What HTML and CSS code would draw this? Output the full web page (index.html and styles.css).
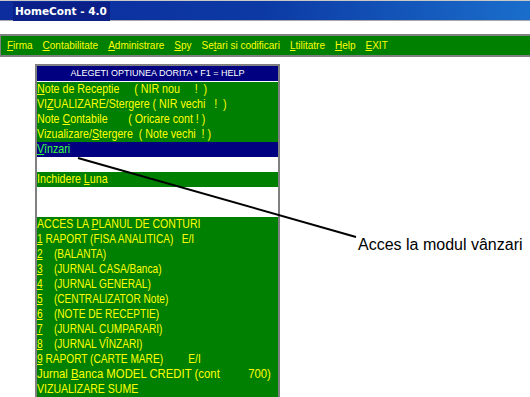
FILE: index.html
```html
<!DOCTYPE html>
<html lang="ro">
<head>
    <meta charset="UTF-8">
    <meta name="viewport" content="width=device-width, initial-scale=1.0">
    <title>HomeCont - 4.0</title>
    <link rel="stylesheet" href="styles.css">
</head>
<body>
    <div class="titlebar"><span class="title">HomeCont - 4.0</span></div>

    <div class="menubar">
        <span><u>F</u>irma</span>
        <span><u>C</u>ontabilitate</span>
        <span><u>A</u>dministrare</span>
        <span><u>S</u>py</span>
        <span>Se<u>t</u>ari si codificari</span>
        <span><u>L</u>tilitatre</span>
        <span><u>H</u>elp</span>
        <span><u>E</u>XIT</span>
    </div>

    <div class="panel">
        <div class="head">ALEGETI OPTIUNEA DORITA * F1 = HELP</div>
        <div class="row"><span class="t"><u>N</u>ote de Receptie     ( NIR nou     !  )</span></div>
        <div class="row"><span class="t">VI<u>Z</u>UALIZARE/Stergere ( NIR vechi   !  )</span></div>
        <div class="row"><span class="t">Note <u>C</u>ontabile       ( Oricare cont ! )</span></div>
        <div class="row"><span class="t">Vizualizare/<u>S</u>tergere  ( Note vechi  ! )</span></div>
        <div class="row sel"><span class="t"><u>V</u>înzari</span></div>
        <div class="gap"></div>
        <div class="row"><span class="t">Inchidere <u>L</u>una</span></div>
        <div class="gap"></div>
        <div class="gap"></div>
        <div class="row caps wide"><span class="t">ACCES LA <u>P</u>LANUL DE CONTURI</span></div>
        <div class="row caps"><span class="t"><u>1</u> RAPORT (FISA ANALITICA)   E/I</span></div>
        <div class="row caps"><span class="t"><u>2</u>    (BALANTA)</span></div>
        <div class="row caps"><span class="t"><u>3</u>    (JURNAL CASA/Banca)</span></div>
        <div class="row caps"><span class="t"><u>4</u>    (JURNAL GENERAL)</span></div>
        <div class="row caps"><span class="t"><u>5</u>    (CENTRALIZATOR Note)</span></div>
        <div class="row caps"><span class="t"><u>6</u>    (NOTE DE RECEPTIE)</span></div>
        <div class="row caps"><span class="t"><u>7</u>    (JURNAL CUMPARARI)</span></div>
        <div class="row caps"><span class="t"><u>8</u>    (JURNAL VÎNZARI)</span></div>
        <div class="row caps"><span class="t"><u>9</u> RAPORT (CARTE MARE)         E/I</span></div>
        <div class="row long"><span class="t">Jurnal <u>B</u>anca MODEL CREDIT (cont         700)</span></div>
        <div class="row caps wide"><span class="t">VIZUALIZARE SUME</span></div>
    </div>

    <!-- annotation drawn over the screenshot -->
    <svg class="pointer" width="530" height="397" viewBox="0 0 530 397">
        <line x1="78" y1="158" x2="356" y2="237" stroke="#000" stroke-width="2"/>
    </svg>
    <div class="callout">Acces la modul vânzari</div>
</body>
</html>
```

FILE: styles.css
```css
body {
    margin: 0;
    width: 530px;
    height: 397px;
    overflow: hidden;
    background: #fff;
    font-family: "Liberation Sans", Arial, sans-serif;
    position: relative;
}
u {
    text-decoration: underline;
    text-underline-offset: 1px;
}
.titlebar {
    height: 19px;
    border-top: 1px solid #c8c8c8;
    border-bottom: 1px solid #a8a8a8;
    background: linear-gradient(to right, #0d2c9e, #0c3aa4 50%, #1a6ecb);
}
.title {
    display: inline-block;
    margin-left: 13px;
    padding: 0 3px 0 2px;
    height: 19px;
    line-height: 19px;
    background: #0a2088;
    color: #fff;
    font-family: "DejaVu Sans", sans-serif;
    font-weight: bold;
    font-size: 10.5px;
}
.menubar {
    margin-top: 13px;
    height: 18px;
    padding: 1px 0 0 6px;
    border-top: 2px solid #808080;
    border-bottom: 2px solid #808080;
    border-left: 1px solid #808080;
    background: #008000;
    color: #ffff00;
    font-size: 10px;
    line-height: 18px;
    display: flex;
    gap: 10px;
    white-space: nowrap;
}
.panel {
    margin: 7px 0 0 35px;
    width: 241px;
    border: 2px solid #808080;
    border-bottom: none;
    font-size: 13.5px;
}
.head {
    height: 15px;
    line-height: 15px;
    border-bottom: 1px solid #fff;
    background: #000080;
    color: #fff;
    font-size: 9px;
    text-align: center;
}
.row {
    height: 15px;
    line-height: 13px;
    background: #008000;
    color: #ffff00;
    white-space: pre;
    overflow: hidden;
}
/* the old dos font is much narrower than Arial */
.row .t {
    display: inline-block;
    transform: scaleX(0.79);
    transform-origin: 0 50%;
}
.row.caps .t {
    transform: scaleX(0.75);
}
.row.caps.wide .t {
    transform: scaleX(0.78);
}
.row.long .t {
    transform: scaleX(0.84);
}
.row.sel {
    background: #000080;
    color: #3cff3c;
}
.gap {
    height: 15px;
    background: #fff;
}
.pointer {
    position: absolute;
    left: 0;
    top: 0;
    pointer-events: none;
}
.callout {
    position: absolute;
    left: 358px;
    top: 237px;
    font-size: 16px;
    line-height: 16px;
    color: #000;
    white-space: nowrap;
}
```
